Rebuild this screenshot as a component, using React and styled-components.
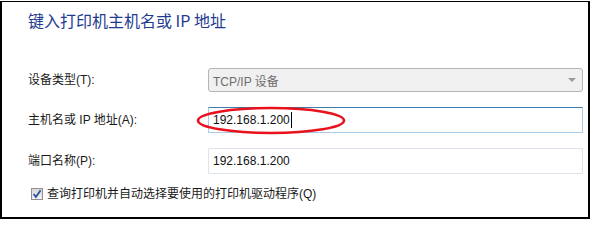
import React from "react";
import styled, { createGlobalStyle } from "styled-components";

const GlobalStyle = createGlobalStyle`
  html, body {
    margin: 0;
    padding: 0;
    background: #ffffff;
  }
  body {
    font-family: "Liberation Sans", "Noto Sans CJK SC", sans-serif;
    font-size: 12px;
    color: #1a1a1a;
  }
`;

const Frame = styled.div`
  box-sizing: border-box;
  width: 590px;
  height: 218px;
  margin-top: 1px;
  border-top: 1px solid #000;
  border-left: 2px solid #000;
  border-right: 2px solid #000;
  border-bottom: 2px solid #000;
  padding: 7px 5px 0 26px;
  background: #fff;
`;

const Title = styled.h1`
  margin: 0;
  font-family: "Noto Sans CJK SC", sans-serif;
  font-size: 16px;
  font-weight: 400;
  line-height: 22px;
  color: #1e3b91;
`;

const Form = styled.div`
  display: grid;
  grid-template-columns: 180px 1fr;
  row-gap: 15px;
  align-items: center;
  margin-top: 37px;
`;

const Label = styled.label`
  font-family: "Liberation Sans", "Noto Sans CJK SC", sans-serif;
  font-size: 12px;
  line-height: 16px;
  color: #1a1a1a;
`;

const Field = styled.div`
  position: relative;
  box-sizing: border-box;
  height: ${(p) => (p.$select ? "24px" : "26px")};
  display: flex;
  align-items: center;
  padding: 0 4px;
  font-size: 12px;
  border: 1px solid ${(p) => (p.$select ? "#b5b5b5" : "#dde3ea")};
  border-radius: ${(p) => (p.$select ? "3px" : "1px")};
  background: ${(p) => (p.$select ? "#f0f0f0" : "#fff")};
  color: ${(p) => (p.$select ? "#6d6d6d" : "#111")};
  ${(p) =>
    p.$focused &&
    `
    border-color: #a8cbe8;
    border-top-color: #3d7bad;
  `}
`;

const Arrow = styled.span`
  margin-left: auto;
  margin-right: 2px;
  width: 0;
  height: 0;
  border-left: 4px solid transparent;
  border-right: 4px solid transparent;
  border-top: 4px solid #9a9a9a;
`;

const Caret = styled.span`
  display: inline-block;
  width: 1px;
  height: 16px;
  background: #000;
  margin-left: 1px;
`;

const Ellipse = styled.svg`
  position: absolute;
  left: -13px;
  top: -2px;
  pointer-events: none;
  overflow: visible;
`;

const CheckRow = styled.div`
  display: flex;
  align-items: center;
  gap: 4px;
  margin-top: 12px;
  padding-left: 3px;
`;

const Box = styled.span`
  box-sizing: border-box;
  width: 12px;
  height: 12px;
  border: 1px solid #8f8f8f;
  background: linear-gradient(#d8d8d8, #f2f2f2);
  display: flex;
  align-items: center;
  justify-content: center;
`;

const Hint = styled.span`
  font-size: 12px;
  line-height: 16px;
  color: #1a1a1a;
`;

const App = () => {
  return (
    <>
      <GlobalStyle />
      <Frame>
        <Title>键入打印机主机名或 IP 地址</Title>
        <Form>
          <Label>设备类型(T):</Label>
          <Field $select>
            TCP/IP 设备
            <Arrow />
          </Field>

          <Label>主机名或 IP 地址(A):</Label>
          <Field $focused>
            192.168.1.200
            <Caret />
            <Ellipse width="150" height="29" viewBox="0 0 150 29">
              <ellipse
                cx="75"
                cy="14.5"
                rx="73"
                ry="12.5"
                fill="none"
                stroke="#e8121c"
                strokeWidth="2.6"
              />
            </Ellipse>
          </Field>

          <Label>端口名称(P):</Label>
          <Field>192.168.1.200</Field>
        </Form>
        <CheckRow>
          <Box>
            <svg width="10" height="10" viewBox="0 0 10 10">
              <path
                d="M1.6 5 L3.9 8 L8.6 1.2"
                fill="none"
                stroke="#2b4ea6"
                strokeWidth="1.8"
              />
            </svg>
          </Box>
          <Hint>查询打印机并自动选择要使用的打印机驱动程序(Q)</Hint>
        </CheckRow>
      </Frame>
    </>
  );
};

export default App;
